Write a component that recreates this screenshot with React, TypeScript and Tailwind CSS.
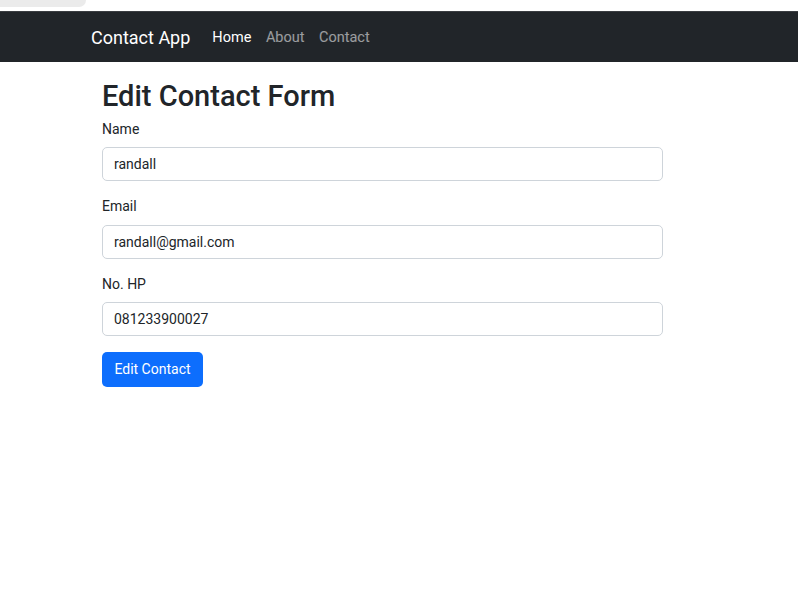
const fields = [
  { label: "Name", value: "randall" },
  { label: "Email", value: "randall@gmail.com" },
  { label: "No. HP", value: "081233900027" },
];

const App = () => {
  return (
    <div className="min-h-[602px] bg-white text-[#212529] font-['Roboto',sans-serif]">
      <div className="h-[11px] bg-white">
        <div className="h-[7px] w-[86px] bg-[#ebebeb] rounded-br-[7px]" />
      </div>
      <nav className="h-[51px] bg-[#212529] flex items-center border-t border-[#3a3d41]">
        <a href="#" className="ml-[91px] text-[18px] text-white">
          Contact App
        </a>
        <div className="ml-[22px] mt-[2px] flex items-center gap-[14.5px] text-[14.5px]">
          <a href="#" className="text-white">
            Home
          </a>
          <a href="#" className="text-white/55">
            About
          </a>
          <a href="#" className="text-white/55">
            Contact
          </a>
        </div>
      </nav>

      <div className="pl-[102px] w-[663px]">
        <h1 className="mt-[17px] mb-[6px] text-[29px] font-medium leading-[1.2]">
          Edit Contact Form
        </h1>
        <form>
          {fields.map((f) => (
            <div key={f.label} className="mb-[16px]">
              <label className="block text-[14px] leading-[19.5px] mb-[8px]">
                {f.label}
              </label>
              <input
                type="text"
                defaultValue={f.value}
                className="block w-full h-[34px] px-[11px] text-[14px] text-[#212529] border border-[#ced4da] rounded-[5px] outline-none"
              />
            </div>
          ))}
          <button
            type="button"
            className="h-[35px] w-[101px] bg-[#0d6efd] text-white text-[14px] rounded-[5px]"
          >
            Edit Contact
          </button>
        </form>
      </div>
    </div>
  );
};

export default App;
